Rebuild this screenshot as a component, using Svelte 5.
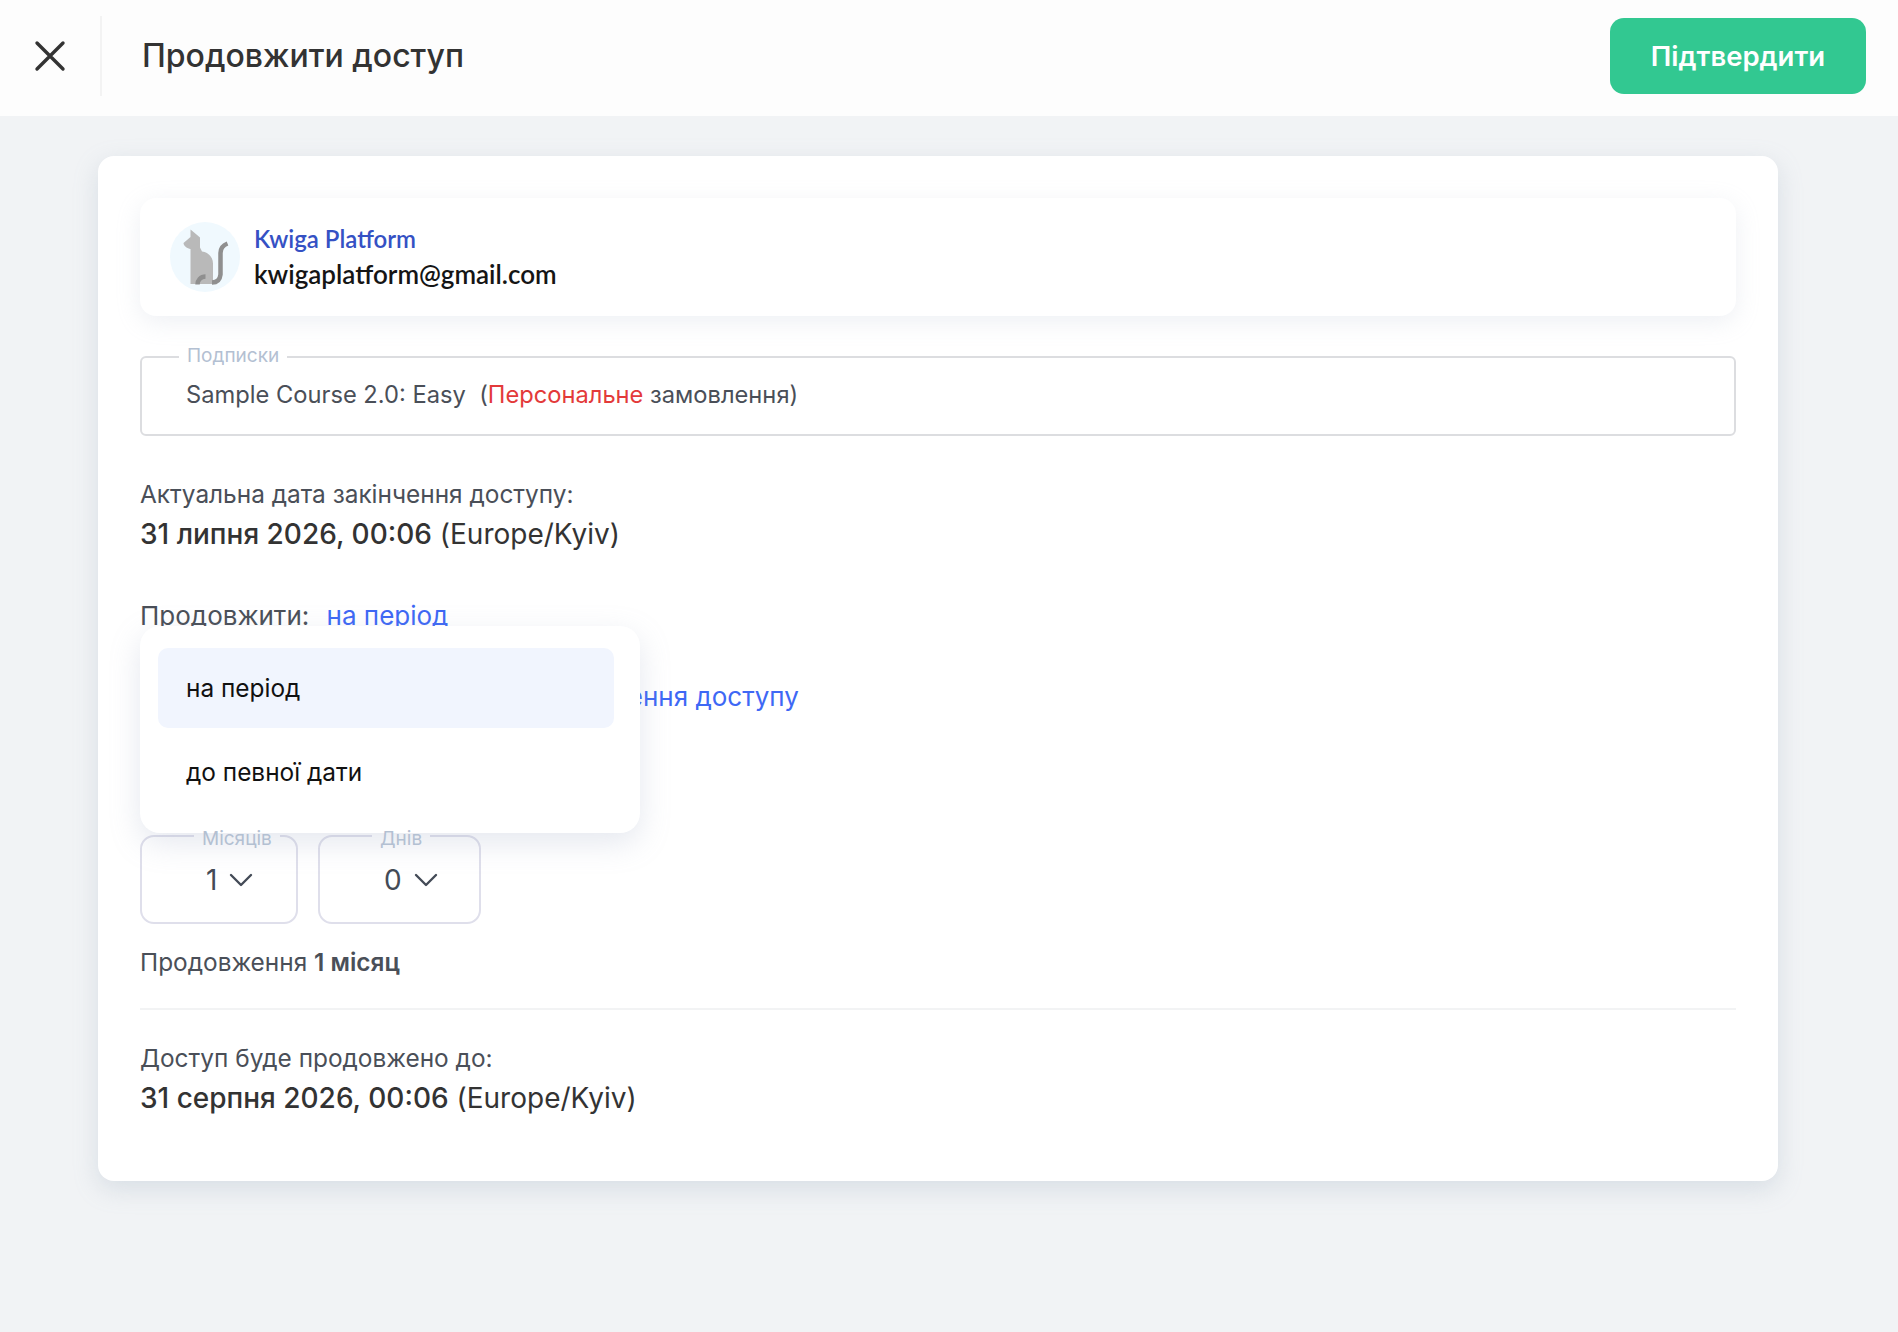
<script lang="ts">
  const periods = [
    { label: 'Місяців', value: '1', size: 'months' },
    { label: 'Днів', value: '0', size: 'days' }
  ];
</script>

<div class="page">
  <header class="topbar">
    <button class="close" aria-label="Закрити">
      <svg width="34" height="34" viewBox="0 0 34 34" fill="none" stroke="#333" stroke-width="3.4" stroke-linecap="round">
        <path d="M4 4l26 26M30 4L4 30" />
      </svg>
    </button>
    <h1>Продовжити доступ</h1>
    <button class="confirm">Підтвердити</button>
  </header>

  <main class="card">
    <section class="user">
      <svg class="avatar" width="70" height="70" viewBox="0 0 70 70">
        <circle cx="35" cy="35" r="35" fill="#f0f9fe" />
        <path d="M20.500 7.500l6 5 3.500 3v10l2 4c7 1 11 6 11 12v20.500H20.500V27c-3-.5-7-3-7-6l7-6z" fill="#b9b9b9" />
        <path d="M42 60.500c5 0 8-3 8.500-8V31c0-5 3-8 7-9.500" fill="none" stroke="#8f8f8f" stroke-width="4.500" />
        <path d="M27.500 62.500c0-4 3-8 8-8" fill="none" stroke="#8f8f8f" stroke-width="4.500" />
      </svg>
      <div class="user-text">
        <a class="user-name" href="#user">Kwiga Platform</a>
        <span class="user-mail">kwigaplatform@gmail.com</span>
      </div>
    </section>

    <fieldset class="subs">
      <legend>Подписки</legend>
      Sample Course 2.0: Easy&nbsp; (<span class="red">Персональне</span> замовлення)
    </fieldset>

    <div class="info">
      <div>Актуальна дата закінчення доступу:</div>
      <div class="date"><b>31 липня 2026, 00:06</b> (Europe/Kyiv)</div>
    </div>

    <div class="options">
      <div class="option-row">Продовжити: <a href="#mode">на період</a></div>
      <div class="option-row second">Починаючи з: <a href="#from">актуальної дати закінчення доступу</a></div>

      <ul class="menu">
        <li class="active">на період</li>
        <li>до певної дати</li>
      </ul>
    </div>

    <div class="selects">
      {#each periods as p}
        <fieldset class="select {p.size}">
          <legend>{p.label}</legend>
          <div class="select-body">
            <span class="value">{p.value}</span>
            <svg width="24" height="14" viewBox="0 0 24 14" fill="none" stroke="#444b57" stroke-width="2.400" stroke-linecap="round" stroke-linejoin="round">
              <path d="M2 2l10 10L22 2" />
            </svg>
          </div>
        </fieldset>
      {/each}
    </div>

    <p class="summary">Продовження <b>1 місяц</b></p>

    <div class="info result">
      <div>Доступ буде продовжено до:</div>
      <div class="date"><b>31 серпня 2026, 00:06</b> (Europe/Kyiv)</div>
    </div>
  </main>
</div>

<style>
  :global(body) {
    margin: 0;
    background: #f1f3f5;
  }

  .page {
    min-height: 1332px;
    font-family: Inter, "Noto Sans", sans-serif;
    color: #4a4f58;
  }

  .topbar {
    display: flex;
    align-items: center;
    height: 116px;
    padding: 0 32px 4px 33px;
    box-sizing: border-box;
    background: #fdfdfd;
  }

  .close {
    display: flex;
    align-items: center;
    height: 80px;
    padding: 0 33px 0 0;
    border: none;
    border-right: 2px solid #f3f3f3;
    background: none;
  }

  h1 {
    flex: 1;
    margin: 0 0 2px 40px;
    font-size: 32px;
    font-weight: 500;
    color: #333;
  }

  .confirm {
    width: 256px;
    height: 76px;
    border: none;
    border-radius: 14px;
    background: #32c891;
    color: #fff;
    font: 600 27.500px Inter, sans-serif;
  }

  .card {
    width: 1596px;
    margin: 40px 0 0 98px;
    padding: 42px 42px 63px;
    border-radius: 16px;
    background: #fff;
    box-shadow: 0 8px 24px rgba(150, 170, 185, 0.28);
    font-size: 24.400px;
  }

  .user {
    display: flex;
    align-items: center;
    gap: 14px;
    height: 118px;
    padding: 0 30px;
    border-radius: 16px;
    box-shadow: 0 6px 24px rgba(170, 180, 200, 0.2);
  }

  .user-text {
    display: flex;
    flex-direction: column;
    gap: 5px;
    font-family: Lato, sans-serif;
    font-weight: 600;
  }

  .user-name {
    color: #3551c4;
    font-size: 24px;
    text-decoration: none;
  }

  .user-mail {
    color: #151515;
    font-size: 26px;
  }

  .subs {
    height: 89px;
    margin: 31px 0 0;
    padding: 0 0 0 44px;
    border: 2px solid #dcdde0;
    border-radius: 6px;
    box-sizing: border-box;
    font-size: 23.700px;
    line-height: 56px;
  }

  legend {
    padding: 0 8px;
    color: #b3c0d2;
    font-size: 19px;
    line-height: 20px;
  }

  .subs legend {
    position: relative;
    top: -1px;
    margin-left: -7px;
  }

  .red {
    color: #e33a3a;
  }

  .info {
    margin-top: 38px;
    line-height: 40px;
  }

  .date {
    color: #333;
    font-size: 28px;
  }

  .date b {
    font-weight: 500;
  }

  .options {
    position: relative;
    margin-top: 42px;
    line-height: 40px;
    font-size: 26px;
  }

  .option-row a {
    margin-left: 10px;
    color: #3e68f5;
    text-decoration: none;
  }

  .second {
    margin-top: 41px;
  }

  .second a {
    margin-left: 16px;
  }

  .menu {
    position: absolute;
    top: 30px;
    left: 0;
    width: 500px;
    height: 207px;
    margin: 0;
    padding: 22px 26px 0 18px;
    box-sizing: border-box;
    list-style: none;
    border-radius: 20px;
    background: #fff;
    box-shadow: 0 10px 30px rgba(150, 165, 190, 0.25);
    color: #111;
    font-size: 24.400px;
  }

  .menu li {
    height: 80px;
    padding: 0 28px;
    border-radius: 10px;
    line-height: 80px;
  }

  .menu li + li {
    margin-top: 4px;
  }

  .menu .active {
    background: #f1f5fe;
  }

  .selects {
    display: flex;
    gap: 20px;
    margin-top: 109px;
  }

  .select {
    min-width: 0;
    height: 98px;
    margin: 0;
    padding: 0;
    border: 2px solid #dfdfeb;
    border-radius: 14px;
    box-sizing: border-box;
    color: #444b57;
    font-size: 28px;
  }

  .months {
    width: 158px;
  }

  .days {
    width: 163px;
  }

  .select-body {
    display: flex;
    align-items: center;
    height: 68px;
    padding-left: 64px;
  }

  .select svg {
    margin-left: 12px;
  }

  .select legend {
    position: relative;
    top: 3px;
    margin-left: 52px;
  }

  .summary {
    margin: 19px 0 0;
    padding-bottom: 27px;
    border-bottom: 2px solid #f2f3f4;
    line-height: 38px;
  }

  .summary b {
    font-weight: 600;
  }

  .result {
    margin-top: 28px;
  }
</style>
